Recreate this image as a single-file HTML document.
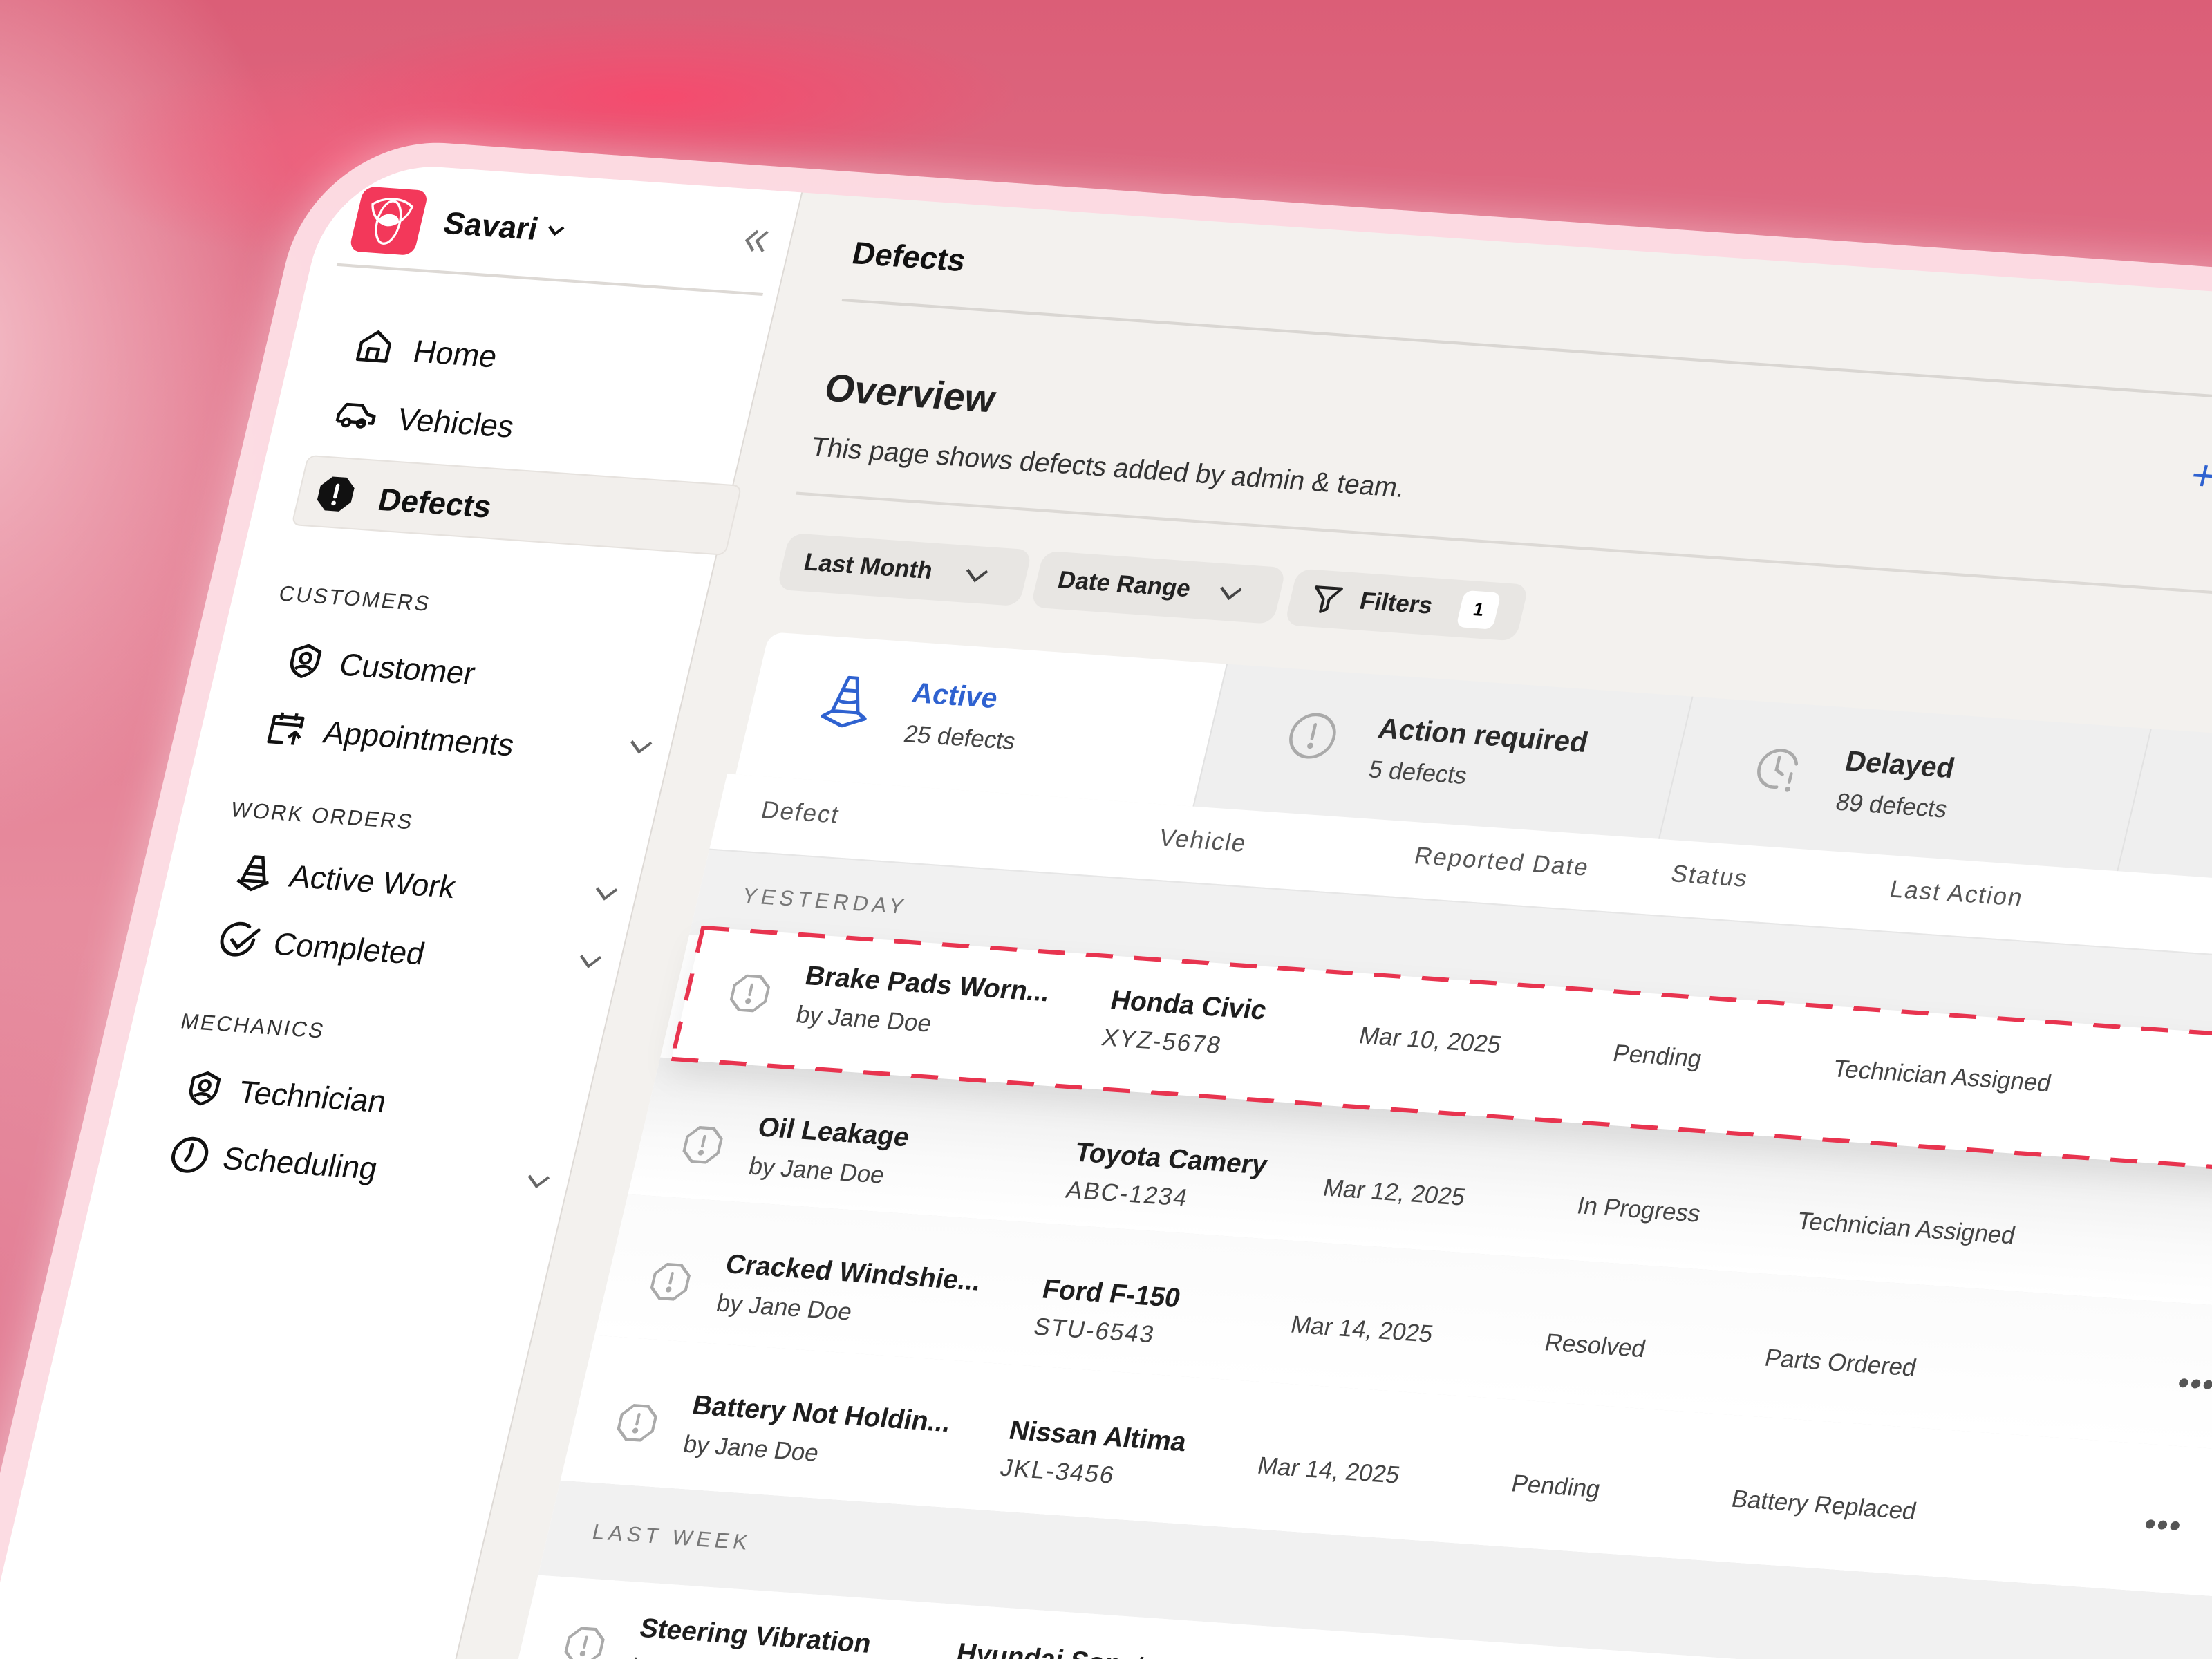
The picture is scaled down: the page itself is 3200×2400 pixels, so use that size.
<!DOCTYPE html>
<html><head><meta charset="utf-8">
<style>
html{margin:0;padding:0;width:3200px;height:2400px;overflow:hidden;}
body{margin:0;padding:0;}
body{width:3200px;height:2400px;overflow:hidden;position:relative;font-family:"Liberation Sans",sans-serif;
background:
radial-gradient(ellipse 700px 160px at 950px 140px, rgba(248,72,108,0.9), rgba(248,72,108,0) 75%),
radial-gradient(ellipse 500px 200px at 500px 230px, rgba(246,95,125,0.7), rgba(246,95,125,0) 75%),
radial-gradient(ellipse 700px 900px at -100px 500px, rgba(246,200,208,0.95), rgba(246,200,208,0) 80%),
radial-gradient(ellipse 600px 700px at -50px 1900px, rgba(226,120,145,0.8), rgba(226,120,145,0) 80%),
linear-gradient(180deg,#db5e77 0%,#e06e86 20%,#e78c9e 55%,#e49aa9 100%);}
#clip{position:absolute;left:0;top:0;width:3200px;height:2400px;overflow:hidden;}
#flat{position:absolute;left:0;top:0;width:0;height:0;transform-origin:0 0;
transform:matrix(2.0408,0.1429,-0.4816,2.0408,526.5,269.4);}
.frame{position:absolute;left:-42px;top:-34px;width:1900px;height:1400px;border-radius:92px;background:rgba(253,224,231,0.95);box-shadow:0 0 30px rgba(255,255,255,0.4);}
.screen{position:absolute;left:-24px;top:-17px;width:1880px;height:1380px;border-radius:74px;background:#f3f1ee;overflow:hidden;}
.in{position:absolute;left:24px;top:17px;}
.a{position:absolute;white-space:nowrap;}
.side{position:absolute;left:-24px;top:-17px;width:354px;height:1400px;background:#fff;border-right:1.5px solid #dedad6;}
.nav{font-size:22px;color:#111;line-height:26px;}
.sec{font-size:15px;color:#333;letter-spacing:1.3px;line-height:18px;}
.btn{position:absolute;height:40px;background:#e8e6e3;border-radius:10px;}
.btxt{font-size:17px;font-weight:bold;color:#222;line-height:20px;}
.th{font-size:17px;color:#555;letter-spacing:1px;line-height:20px;}
.tt{font-size:19px;font-weight:bold;color:#1e1e1e;line-height:22px;}
.ts{font-size:17px;color:#444;line-height:20px;}
.band{position:absolute;left:0;width:1600px;background:#f1f1f1;}
.row{position:absolute;left:0;width:1600px;background:#fff;border-bottom:1px solid #e6e6e6;}
.dh{position:absolute;height:3px;background:repeating-linear-gradient(90deg,#e8344f 0 19px,transparent 19px 34px);}
.dv{position:absolute;width:3px;background:repeating-linear-gradient(180deg,#e8344f 0 19px,transparent 19px 34px);}
</style></head><body>
<div id="clip">
<div id="flat">
<div class="frame"></div>
<div class="screen">
<div class="side"></div>
<div class="in">
<div class="a" style="left:0;top:0;width:46px;height:46px;border-radius:8px;background:#f3385a;">
<svg width="46" height="46" viewBox="0 0 46 46" fill="none" stroke="#fff" stroke-width="1.6"><ellipse cx="23" cy="24" rx="8" ry="15"/><path d="M9 12c8-6 20-6 28 0c-2 10-10 14-14 14s-12-4-14-14z"/><path d="M17 22c2-4 10-4 12 0c-2 4-10 4-12 0z" fill="#fff"/></svg></div>
<div class="a" style="left:62px;top:9px;font-size:22px;font-weight:bold;color:#111;line-height:26px;">Savari</div>
<svg class="a" style="left:134px;top:17px" width="14" height="10" viewBox="0 0 14 10" fill="none" stroke="#111" stroke-width="2"><path d="M2 2l5 5 5-5"/></svg>
<svg class="a" style="left:272px;top:9px" width="22" height="20" viewBox="0 0 22 20" fill="none" stroke="#777" stroke-width="2"><path d="M10 3l-6 7 6 7M17 3l-6 7 6 7"/></svg>
<div class="a" style="left:-6px;top:55px;width:302px;height:1.5px;background:#ddd9d5"></div>

<svg class="a" style="left:21px;top:98px" width="26" height="26" viewBox="0 0 26 26" fill="none" stroke="#111" stroke-width="2.2" stroke-linejoin="round"><path d="M3 11l10-8 10 8v12H3z"/><path d="M9 23v-8h7v8"/></svg>
<div class="a nav" style="left:62px;top:100px">Home</div>
<svg class="a" style="left:18px;top:148px" width="30" height="24" viewBox="0 0 30 24" fill="none" stroke="#111" stroke-width="2.2" stroke-linejoin="round"><path d="M2 17v-5l4-7h11l5 6 5 1v5h-3M6 17H2M21 17H11"/><circle cx="8.5" cy="17.5" r="2.5"/><circle cx="19" cy="17.5" r="2.5"/></svg>
<div class="a nav" style="left:62px;top:148px">Vehicles</div>
<div class="a" style="left:5px;top:190px;width:308px;height:50px;background:#f2efec;border:1px solid #e6e2de;border-radius:6px;box-sizing:border-box;"></div>
<svg class="a" style="left:18px;top:203px" width="26" height="26" viewBox="0 0 26 26"><path d="M8 1h10l7 7v10l-7 7H8l-7-7V8z" fill="#111"/><path d="M13 7v8" stroke="#fff" stroke-width="2.6" stroke-linecap="round"/><circle cx="13" cy="19.5" r="1.6" fill="#fff"/></svg>
<div class="a nav" style="left:62px;top:205px;font-weight:bold">Defects</div>

<div class="a sec" style="left:8px;top:280px">CUSTOMERS</div>
<svg class="a" style="left:24px;top:321px" width="26" height="26" viewBox="0 0 26 26" fill="none" stroke="#111" stroke-width="2.2" stroke-linejoin="round"><path d="M13 2l9 4v7c0 6-4 9-9 11-5-2-9-5-9-11V6z"/><circle cx="13" cy="11" r="3.5"/><path d="M7.5 19c2-3 9-3 11 0"/></svg>
<div class="a nav" style="left:62px;top:322px">Customer</div>
<svg class="a" style="left:22px;top:368px" width="28" height="28" viewBox="0 0 28 28" fill="none" stroke="#111" stroke-width="2.2" stroke-linejoin="round"><path d="M13 24H3V6h20v7M3 11h20M8 3v5M18 3v5"/><path d="M20 16v9M16 20l4-4 4 4"/></svg>
<div class="a nav" style="left:62px;top:370px">Appointments</div>
<svg class="a" style="left:276px;top:372px" width="18" height="12" viewBox="0 0 18 12" fill="none" stroke="#666" stroke-width="2"><path d="M2 2l7 7 7-7"/></svg>

<div class="a sec" style="left:10px;top:433px">WORK ORDERS</div>
<svg class="a" style="left:23px;top:470px" width="28" height="28" viewBox="0 0 28 28" fill="none" stroke="#111" stroke-width="2.2" stroke-linejoin="round"><path d="M11 3h6l5 17H6z"/><path d="M9 10h10M7.5 15h13"/><path d="M3 20l11 6 11-6"/></svg>
<div class="a nav" style="left:62px;top:472px">Active Work</div>
<svg class="a" style="left:276px;top:476px" width="18" height="12" viewBox="0 0 18 12" fill="none" stroke="#666" stroke-width="2"><path d="M2 2l7 7 7-7"/></svg>
<svg class="a" style="left:23px;top:519px" width="28" height="28" viewBox="0 0 28 28" fill="none" stroke="#111" stroke-width="2.4" stroke-linecap="round"><path d="M24 12a11 11 0 1 1-5-9"/><path d="M9 13l5 5L26 5"/></svg>
<div class="a nav" style="left:62px;top:520px">Completed</div>
<svg class="a" style="left:276px;top:524px" width="18" height="12" viewBox="0 0 18 12" fill="none" stroke="#666" stroke-width="2"><path d="M2 2l7 7 7-7"/></svg>

<div class="a sec" style="left:10px;top:583px">MECHANICS</div>
<svg class="a" style="left:24px;top:624px" width="26" height="26" viewBox="0 0 26 26" fill="none" stroke="#111" stroke-width="2.2" stroke-linejoin="round"><path d="M13 2l9 4v7c0 6-4 9-9 11-5-2-9-5-9-11V6z"/><circle cx="13" cy="11" r="3.5"/><path d="M7.5 19c2-3 9-3 11 0"/></svg>
<div class="a nav" style="left:62px;top:625px">Technician</div>
<svg class="a" style="left:24px;top:670px" width="28" height="28" viewBox="0 0 28 28" fill="none" stroke="#111" stroke-width="2.4" stroke-linecap="round"><circle cx="14" cy="14" r="11.5"/><path d="M14 7v7l-2 4"/></svg>
<div class="a nav" style="left:62px;top:672px">Scheduling</div>
<svg class="a" style="left:276px;top:680px" width="18" height="12" viewBox="0 0 18 12" fill="none" stroke="#666" stroke-width="2"><path d="M2 2l7 7 7-7"/></svg>

<div class="a" style="left:352px;top:10px;font-size:22px;font-weight:bold;color:#111;line-height:26px">Defects</div>
<div class="a" style="left:352px;top:55px;width:1500px;height:1.5px;background:#d9d6d2"></div>
<div class="a" style="left:355px;top:102px;font-size:27px;font-weight:bold;color:#222;line-height:32px">Overview</div>
<div class="a" style="left:355px;top:149px;font-size:19px;color:#333;line-height:24px">This page shows defects added by admin &amp; team.</div>
<div class="a" style="left:1322px;top:98px;font-size:30px;color:#2f62d0;line-height:30px">+</div>
<div class="a" style="left:352px;top:192px;width:1500px;height:1.5px;background:#dcd9d5"></div>

<div class="btn" style="left:354px;top:221px;width:172px"></div>
<div class="a btxt" style="left:369px;top:231px">Last Month</div>
<svg class="a" style="left:482px;top:236px" width="18" height="12" viewBox="0 0 18 12" fill="none" stroke="#444" stroke-width="2"><path d="M2 2l7 7 7-7"/></svg>
<div class="btn" style="left:534px;top:221px;width:172px"></div>
<div class="a btxt" style="left:549px;top:231px">Date Range</div>
<svg class="a" style="left:662px;top:236px" width="18" height="12" viewBox="0 0 18 12" fill="none" stroke="#444" stroke-width="2"><path d="M2 2l7 7 7-7"/></svg>
<div class="btn" style="left:714px;top:221px;width:164px"></div>
<svg class="a" style="left:728px;top:230px" width="22" height="22" viewBox="0 0 22 22" fill="none" stroke="#222" stroke-width="2" stroke-linejoin="round"><path d="M2 3h18l-7 8v7l-4 2v-9z"/></svg>
<div class="a btxt" style="left:763px;top:231px">Filters</div>
<div class="a" style="left:834px;top:228px;width:26px;height:26px;background:#fff;border-radius:6px;font-size:13px;font-weight:bold;text-align:center;line-height:26px">1</div>

<div class="a" style="left:356px;top:291px;width:324px;height:101px;background:#fff;border-radius:10px 0 0 0"></div>
<div class="a" style="left:680px;top:291px;width:330px;height:101px;background:#efefef;border-left:1px solid #e2e2e2"></div>
<div class="a" style="left:1010px;top:291px;width:325px;height:101px;background:#efefef;border-left:1px solid #e2e2e2"></div>
<div class="a" style="left:1335px;top:291px;width:325px;height:101px;background:#efefef;border-left:1px solid #e2e2e2"></div>
<svg class="a" style="left:404px;top:316px" width="36" height="38" viewBox="0 0 36 38" fill="none" stroke="#2f62d0" stroke-width="2.4" stroke-linejoin="round"><path d="M15 3h6l6 24H9z"/><path d="M13 12h10M11 19c4 2 10 2 14 0"/><path d="M9 27l-6 4 15 6 15-6-6-4"/></svg>
<div class="a" style="left:466px;top:315px;font-size:20px;font-weight:bold;color:#2f62d0;line-height:24px">Active</div>
<div class="a" style="left:467px;top:345px;font-size:17px;color:#444;line-height:22px">25 defects</div>
<svg class="a" style="left:734px;top:319px" width="36" height="36" viewBox="0 0 36 36" fill="none" stroke="#aaa" stroke-width="2.2"><circle cx="18" cy="18" r="15"/><path d="M18 10v10" stroke-linecap="round"/><circle cx="18" cy="25" r="1" fill="#aaa"/></svg>
<div class="a" style="left:797px;top:317px;font-size:20px;font-weight:bold;color:#2a2a2a;line-height:24px">Action required</div>
<div class="a" style="left:797px;top:347px;font-size:17px;color:#444;line-height:22px">5 defects</div>
<svg class="a" style="left:1064px;top:319px" width="36" height="36" viewBox="0 0 36 36" fill="none" stroke="#aaa" stroke-width="2.2" stroke-linecap="round"><path d="M30 14A13 13 0 1 0 20 31"/><path d="M17 10v9l5 3"/><path d="M28 21v6"/><circle cx="28" cy="32" r="0.8" fill="#aaa"/></svg>
<div class="a" style="left:1128px;top:317px;font-size:20px;font-weight:bold;color:#2a2a2a;line-height:24px">Delayed</div>
<div class="a" style="left:1128px;top:347px;font-size:17px;color:#444;line-height:22px">89 defects</div>

<div class="a" style="left:350px;top:392px;width:1600px;height:1000px;background:#fff">
  <div class="a th" style="left:30px;top:14px">Defect</div>
  <div class="a th" style="left:312px;top:14px">Vehicle</div>
  <div class="a th" style="left:493px;top:14px">Reported Date</div>
  <div class="a th" style="left:675px;top:14px">Status</div>
  <div class="a th" style="left:830px;top:14px">Last Action</div>
  <div class="band" style="top:53px;height:60px;border-top:1px solid #e6e6e6"></div>
  <div class="a" style="left:31px;top:76px;font-size:15px;color:#777;letter-spacing:3px;line-height:18px">YESTERDAY</div>
  <div class="row" style="top:201px;height:97px;background:linear-gradient(180deg,#ececec,#fafafa 60%,#fff)"></div>
  <div class="row" style="top:298px;height:100px;background:linear-gradient(180deg,#fbfbfb,#fff)"></div>
  <div class="row" style="top:398px;height:103px;"></div>
  <div class="band" style="top:501px;height:67px"></div>
  <div class="a" style="left:31px;top:527px;font-size:15px;color:#777;letter-spacing:3px;line-height:18px">LAST WEEK</div>
  <div class="row" style="top:568px;height:120px;"></div>
</div>
<div class="a" style="left:358px;top:500px;width:1500px;height:94px;background:#fff;box-shadow:0 10px 22px rgba(0,0,0,0.08);"></div>
<div class="dh" style="left:358px;top:499px;width:1500px"></div>
<div class="dh" style="left:358px;top:592px;width:1500px"></div>
<div class="dv" style="left:357px;top:499px;height:96px"></div>

<div id="rows"></div>
</div></div>
</div>
</div>
<script>
var rows=[
[530,'Brake Pads Worn...','Honda Civic','XYZ-5678','Mar 10, 2025','Pending','Technician Assigned',0,8],
[638,'Oil Leakage','Toyota Camery','ABC-1234','Mar 12, 2025','In Progress','Technician Assigned',0,0],
[735,'Cracked Windshie...','Ford F-150','STU-6543','Mar 14, 2025','Resolved','Parts Ordered',1,0],
[835,'Battery Not Holdin...','Nissan Altima','JKL-3456','Mar 14, 2025','Pending','Battery Replaced',1,0],
[993,'Steering Vibration','Hyundai Sonata','','','','',0,0]];
var h='';
rows.forEach(function(r){
 var v=r[0],o=r[8];
 h+='<svg class="a" style="left:'+(380+o)+'px;top:'+(v)+'px" width="28" height="28" viewBox="0 0 28 28" fill="none" stroke="#aaa" stroke-width="2"><path d="M9 2h10l7 7v10l-7 7H9l-7-7V9z"/><path d="M14 8v7" stroke-linecap="round"/><circle cx="14" cy="19.5" r="1" fill="#aaa"/></svg>';
 h+='<div class="a tt" style="left:'+(430+o)+'px;top:'+(v-11)+'px">'+r[1]+'</div>';
 h+='<div class="a ts" style="left:'+(430+o)+'px;top:'+(v+17)+'px">by Jane Doe</div>';
 h+='<div class="a tt" style="left:655px;top:'+(v-9)+'px">'+r[2]+'</div>';
 h+='<div class="a ts" style="left:655px;top:'+(v+18)+'px;letter-spacing:1px">'+r[3]+'</div>';
 h+='<div class="a ts" style="left:834px;top:'+(v+4)+'px">'+r[4]+'</div>';
 h+='<div class="a ts" style="left:1014px;top:'+(v+4)+'px">'+r[5]+'</div>';
 h+='<div class="a ts" style="left:1170px;top:'+(v+4)+'px">'+r[6]+'</div>';
 if(r[7]) h+='<div class="a" style="left:1462px;top:'+(v-2)+'px;font-size:22px;color:#555;letter-spacing:1px;font-weight:bold">&#8226;&#8226;&#8226;</div>';
});
document.getElementById('rows').innerHTML=h;
</script>
</body></html>
